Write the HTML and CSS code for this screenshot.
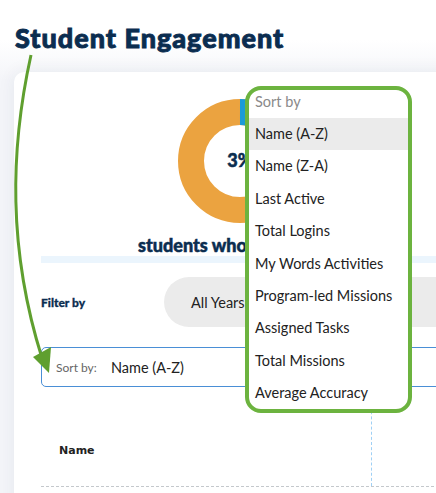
FILE: index.html
```html
<!DOCTYPE html>
<html>
<head>
<meta charset="utf-8">
<link rel="stylesheet" href="styles.css">
</head>
<body>
<div class="page">
  <h1 class="title">Student Engagement</h1>
  <div class="card">
    <div class="chart">
      <div class="donut">
        <svg width="124" height="124" viewBox="0 0 124 124">
          <circle cx="62" cy="62" r="49" fill="none" stroke="#eba340" stroke-width="26"/>
          <circle cx="62" cy="62" r="49" fill="none" stroke="#1b9bd7" stroke-width="26" stroke-dasharray="9.2 300" transform="rotate(-90 62 62)"/>
        </svg>
        <span class="pct">3%</span>
      </div>
      <div class="chart-label">students who logged in</div>
    </div>
    <div class="rule"></div>
    <div class="filter-row">
      <span class="filter-label">Filter by</span>
      <div class="pill">All Years</div>
    </div>
    <div class="sort-select">
      <span class="sort-label">Sort by:</span>
      <span class="sort-value">Name (A-Z)</span>
    </div>
    <div class="table-head">
      <div class="th th-name">Name</div>
      <div class="th"></div>
    </div>
  </div>

  <div class="menu">
    <div class="menu-head">Sort by</div>
    <div class="menu-item active">Name (A-Z)</div>
    <div class="menu-item">Name (Z-A)</div>
    <div class="menu-item">Last Active</div>
    <div class="menu-item">Total Logins</div>
    <div class="menu-item">My Words Activities</div>
    <div class="menu-item">Program-led Missions</div>
    <div class="menu-item">Assigned Tasks</div>
    <div class="menu-item">Total Missions</div>
    <div class="menu-item">Average Accuracy</div>
  </div>

  <svg class="arrow" width="436" height="493" viewBox="0 0 436 493">
    <path d="M31 55 C 10 150, 8 250, 42 358" fill="none" stroke="#5f9f2f" stroke-width="3"/>
    <polygon points="33,357 51,347 49,373" fill="#5f9f2f"/>
  </svg>
</div>
</body>
</html>
```

FILE: styles.css
```css
html, body {
  margin: 0;
  padding: 0;
}
body {
  background: #ffffff;
  width: 436px;
  height: 493px;
  overflow: hidden;
  font-family: "Lato", "Noto Sans", sans-serif;
}
.page {
  position: relative;
  width: 436px;
  height: 493px;
  overflow: hidden;
  background: linear-gradient(#ffffff 0, #ffffff 40px, #f4f5f9 80px, #f4f5f9 100%);
}
.title {
  margin: 0;
  padding: 24px 0 0 15px;
  font-size: 27px;
  line-height: 28px;
  font-weight: 900;
  color: #0b2d50;
  letter-spacing: 1px;
  -webkit-text-stroke: 0.9px #0b2d50;
}
.card {
  margin: 20px 0 0 14px;
  width: 460px;
  height: 440px;
  background: #fff;
  border-top-left-radius: 10px;
  box-shadow: 0 0 18px rgba(30, 50, 90, 0.07);
  padding: 27px 0 0 27px;
  box-sizing: border-box;
}
.chart {
  display: flex;
  flex-direction: column;
}
.donut {
  position: relative;
  width: 124px;
  height: 124px;
  margin-left: 137px;
}
.donut svg {
  display: block;
}
.pct {
  position: absolute;
  left: 0;
  right: 0;
  top: 50px;
  text-align: center;
  font-size: 18px;
  line-height: 22px;
  font-weight: 900;
  color: #0b2d50;
  -webkit-text-stroke: 0.5px #0b2d50;
}
.chart-label {
  margin-top: 12px;
  padding-left: 97px;
  font-size: 18px;
  line-height: 20px;
  font-weight: 900;
  color: #0b2d50;
  white-space: nowrap;
  -webkit-text-stroke: 0.5px #0b2d50;
}
.rule {
  margin-top: 1px;
  height: 7px;
  background: #ebf5fd;
}
.filter-row {
  display: flex;
  align-items: center;
  margin-top: 14px;
}
.filter-label {
  width: 123px;
  font-size: 12px;
  font-weight: 900;
  color: #0b2d50;
  -webkit-text-stroke: 0.3px #0b2d50;
}
.pill {
  height: 50px;
  border-radius: 25px;
  background: #ebebeb;
  flex: 1;
  display: flex;
  align-items: center;
  padding-left: 27px;
  font-size: 14.5px;
  color: #222;
}
.sort-select {
  margin-top: 20px;
  height: 40px;
  border: 1px solid #4a8fd6;
  border-radius: 5px;
  box-sizing: border-box;
  display: flex;
  align-items: center;
  padding-left: 14px;
}
.sort-label {
  width: 55px;
  font-size: 12px;
  color: #666;
}
.sort-value {
  font-size: 14.5px;
  color: #222;
}
.table-head {
  display: grid;
  grid-template-columns: 331px 1fr;
  margin-top: 14px;
  height: 85px;
  border-bottom: 1px dashed #c4c8cc;
}
.th {
  display: flex;
  align-items: center;
  padding-top: 14px;
}
.th-name {
  padding-left: 18px;
  border-right: 1px dashed #9fd0f5;
  font-family: "DejaVu Sans", sans-serif;
  font-weight: bold;
  font-size: 11px;
  color: #222;
}
.menu {
  position: absolute;
  left: 245px;
  top: 86px;
  width: 167px;
  height: 327px;
  box-sizing: border-box;
  border: 4px solid #6cb33f;
  border-radius: 16px;
  background: #fff;
  overflow: hidden;
}
.menu-head {
  height: 28px;
  padding-left: 6px;
  box-sizing: border-box;
  padding-top: 1px;
  font-size: 14.5px;
  line-height: 22px;
  color: #8a8a8a;
}
.menu-item {
  height: 32.4px;
  line-height: 32.4px;
  padding-left: 6px;
  font-size: 14.5px;
  color: #222;
  white-space: nowrap;
}
.menu-item.active {
  background: #ebebeb;
}
.arrow {
  position: absolute;
  left: 0;
  top: 0;
  pointer-events: none;
}
```
